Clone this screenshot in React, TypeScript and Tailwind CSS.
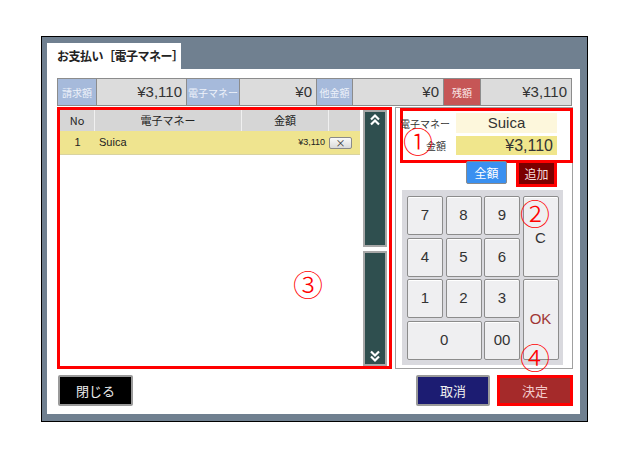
const jp = "font-['Noto_Sans_CJK_JP',sans-serif]"
const num = "font-['Liberation_Sans','Noto_Sans_CJK_JP',sans-serif]"

function Chevrons({ dir }: { dir: 'up' | 'down' }) {
  return (
    <svg width="12" height="13" viewBox="0 0 12 13" className={dir === 'down' ? 'rotate-180' : ''}>
      <path d="M2 6.5 L6 2.5 L10 6.5 M2 11.5 L6 7.5 L10 11.5" stroke="#fff" strokeWidth="2.2" fill="none" />
    </svg>
  )
}

function Key({ label, className = '' }: { label: string; className?: string }) {
  return (
    <button
      className={`flex items-center justify-center rounded-[2px] border border-[#8c8c8c] bg-[#efeff1] text-[15px] text-[#333] shadow-[inset_0_1px_0_#fff] ${num} ${className}`}
    >
      {label}
    </button>
  )
}

function Mark({ n, x, y }: { n: string; x: number; y: number }) {
  return (
    <span
      className={`pointer-events-none absolute text-[30px] font-light leading-none text-[#ff0000] ${jp}`}
      style={{ left: x - 15, top: y - 15 }}
    >
      {n}
    </span>
  )
}

export default function App() {
  const header = [
    { t: '請求額', w: 'w-[39px]', kind: 'label' },
    { t: '¥3,110', w: 'w-[90px]', kind: 'value' },
    { t: '電子マネー', w: 'w-[53px]', kind: 'label' },
    { t: '¥0', w: 'w-[77px]', kind: 'value' },
    { t: '他金額', w: 'w-[36px]', kind: 'label' },
    { t: '¥0', w: 'w-[91px]', kind: 'value' },
    { t: '残額', w: 'w-[37px]', kind: 'red' },
    { t: '¥3,110', w: 'w-[92px]', kind: 'value' },
  ]

  return (
    <div className={`relative h-[462px] w-[635px] bg-white pl-[41px] pt-[36px] ${jp}`}>
      <div className="h-[386px] w-[547px] border border-black bg-[#708090] pl-[5px] pt-[6px]">
        {/* tab */}
        <div className="flex h-[26px] w-[134px] items-center whitespace-nowrap bg-white pl-[10px] text-[12px] font-bold tracking-[-0.5px] text-[#222]">
          お支払い［電子マネー］
        </div>

        <div className="h-[345px] w-[533px] bg-white pl-[10px] pt-[9px]">
          {/* totals */}
          <div className="flex h-[28px] w-[515px]">
            {header.map((c, i) => (
              <div
                key={i}
                className={`flex h-full items-center whitespace-nowrap border-y border-l border-[#8c8c8c] ${c.w} ${
                  i === header.length - 1 ? 'border-r' : ''
                } ${
                  c.kind === 'label'
                    ? 'justify-center bg-[#a6badb] text-[10px] text-[#eef2fa]'
                    : c.kind === 'red'
                      ? 'justify-center bg-[#c65656] text-[10px] text-[#fbe9e9]'
                      : `justify-end bg-[#dcdcdc] pr-[4px] text-[15px] text-[#333] ${num}`
                }`}
              >
                {c.t}
              </div>
            ))}
          </div>

          <div className="mt-px flex gap-[3px]">
            {/* list */}
            <div className="flex h-[262px] w-[335px] gap-[3px] border-[3px] border-[#ff0000] pr-[2px]">
              <div className="flex w-[300px] flex-col bg-white">
                <div className="flex h-[21px] bg-[#d6d6d6] text-[11px] text-[#222]">
                  <div className="flex w-[35px] items-center justify-center border-r border-[#f0f0f0]">No</div>
                  <div className="flex w-[147px] items-center justify-center border-r border-[#f0f0f0]">電子マネー</div>
                  <div className="flex w-[87px] items-center justify-center border-r border-[#f0f0f0]">金額</div>
                  <div className="w-[31px]" />
                </div>
                <div className="flex h-[24px] border-b border-[#d9d3a0] bg-[#efe48f] text-[11px] text-[#222]">
                  <div className={`flex w-[35px] items-center justify-center ${num}`}>1</div>
                  <div className={`flex w-[147px] items-center pl-[4px] ${num}`}>Suica</div>
                  <div className={`flex w-[87px] items-center justify-end pr-[4px] text-[9px] ${num}`}>¥3,110</div>
                  <div className="flex w-[31px] items-center">
                    <button className="flex h-[12px] w-[23px] items-center justify-center rounded-[2px] border border-[#8a8a8a] bg-gradient-to-b from-[#fafafa] to-[#dadada] text-[10px] leading-none text-[#333]">
                      ×
                    </button>
                  </div>
                </div>
              </div>
              <div className="flex w-[24px] flex-col gap-[4px]">
                <div className="flex h-[137px] justify-center border-2 border-[#a8a8a8] bg-[#2f4f4f] pt-[1px]">
                  <Chevrons dir="up" />
                </div>
                <div className="flex flex-1 items-end justify-center border-2 border-[#a8a8a8] bg-[#2f4f4f] pb-[1px]">
                  <Chevrons dir="down" />
                </div>
              </div>
            </div>

            {/* right panel */}
            <div className="flex h-[262px] w-[178px] flex-col border border-[#a0a0a0]">
              <div className="ml-[4px] flex h-[55px] w-[173px] flex-col gap-[3px] border-[3px] border-[#ff0000] pt-[2px]">
                <div className="flex h-[20px] items-center">
                  <span className="ml-[-3px] w-[56px] whitespace-nowrap text-[10px] text-[#333]">電子マネー</span>
                  <div className={`flex h-full w-[101px] items-center justify-center bg-[#fdf7dc] text-[15px] text-[#333] ${num}`}>
                    Suica
                  </div>
                </div>
                <div className="flex h-[19px] items-center">
                  <span className="ml-[-3px] w-[56px] pl-[26px] text-[10px] text-[#333]">金額</span>
                  <div className={`flex h-full w-[101px] items-center justify-end bg-[#f0e68c] pr-[4px] text-[16px] text-[#333] ${num}`}>
                    ¥3,110
                  </div>
                </div>
              </div>

              <div className="mt-[-3px] flex h-[29px] items-start">
                <button className="ml-[70px] mt-[1px] h-[23px] w-[41px] rounded-[2px] border border-[#8a8a8a] bg-[#3a90f0] text-[12px] text-white">
                  全額
                </button>
                <div className="ml-[9px] h-[27px] w-[41px] border-[3px] border-[#ff0000] bg-[#7b0000] text-center text-[12px] leading-[21px] text-[#f4dede]">
                  追加
                </div>
              </div>

              <div className="ml-[6px] mt-[1px] h-[175px] w-[161px] bg-[#d9d9de] pl-[5px] pt-[6px]">
                <div className="grid grid-cols-[repeat(4,36px)] grid-rows-[repeat(4,39px)] gap-[2.5px]">
                  <Key label="7" />
                  <Key label="8" />
                  <Key label="9" />
                  <Key label="C" className="row-span-2 items-start pt-[30px]" />
                  <Key label="4" />
                  <Key label="5" />
                  <Key label="6" />
                  <Key label="1" />
                  <Key label="2" />
                  <Key label="3" />
                  <Key label="OK" className="row-span-2 text-[#a03535]" />
                  <Key label="0" className="col-span-2" />
                  <Key label="00" />
                </div>
              </div>
            </div>
          </div>

          {/* footer */}
          <div className="mt-[6px] flex w-[516px] items-center">
            <button className="ml-px h-[31px] w-[75px] rounded-[2px] border-2 border-[#9a9a9a] bg-black text-[13px] text-[#eee]">
              閉じる
            </button>
            <button className="ml-auto h-[31px] w-[74px] rounded-[2px] border-2 border-[#9a9a9a] bg-[#1c1c72] text-[13px] text-[#eee]">
              取消
            </button>
            <button className="ml-[7px] h-[31px] w-[76px] border-[3px] border-[#ff0000] bg-[#a52a2a] text-[13px] text-[#f2caca]">
              決定
            </button>
          </div>
        </div>
      </div>

      <Mark n="①" x={418} y={140} />
      <Mark n="②" x={535} y={212} />
      <Mark n="③" x={308} y={283} />
      <Mark n="④" x={535} y={356} />
    </div>
  )
}
